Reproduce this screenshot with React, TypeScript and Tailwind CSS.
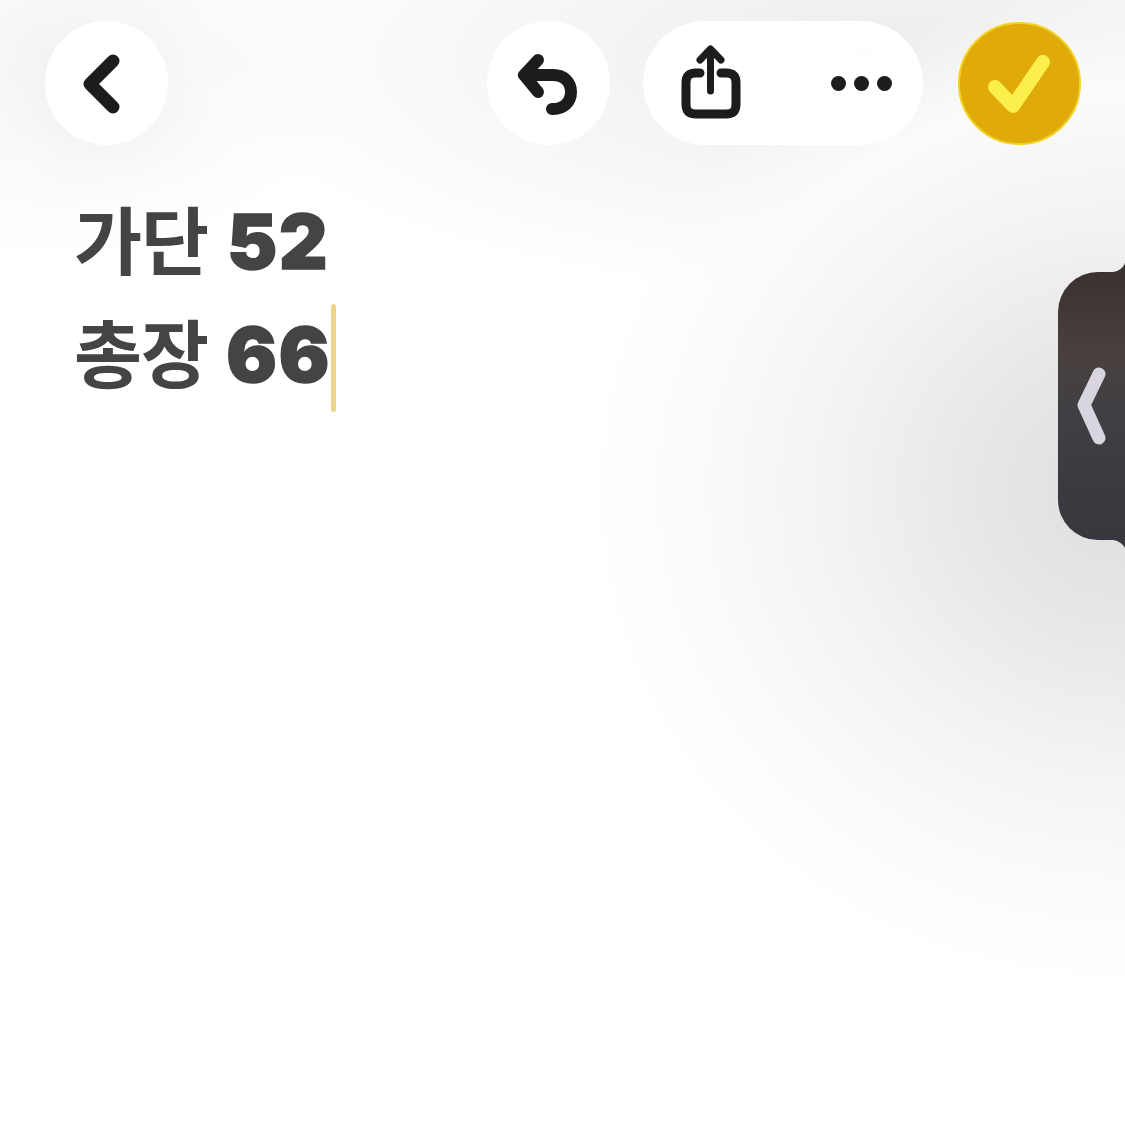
function IconButton({ children }: { children: React.ReactNode }) {
  return (
    <button className="flex h-[124px] w-[123px] items-center justify-center rounded-full bg-white">
      {children}
    </button>
  );
}

export default function App() {
  return (
    <div className="relative h-[1125px] w-[1125px] overflow-hidden bg-white bg-[radial-gradient(ellipse_540px_500px_at_1125px_490px,#dedede_0%,#e6e6e6_25%,#f3f3f3_55%,#fbfbfb_80%,#ffffff00_100%),radial-gradient(ellipse_700px_240px_at_900px_60px,#ececec_0%,#ffffff00_100%),radial-gradient(ellipse_300px_200px_at_60px_60px,#f5f5f5_0%,#ffffff00_100%)]">
      <header className="flex items-center px-[45px] pt-[21px]">
        <div className="shrink-0 drop-shadow-[0_10px_30px_rgba(0,0,0,0.03)]">
          <IconButton>
            <svg width="123" height="124" viewBox="0 0 123 124" fill="none">
              <path d="M68 40 L45 63 L68 86" stroke="#1c1c1c" strokeWidth="13" strokeLinecap="round" strokeLinejoin="round" />
            </svg>
          </IconButton>
        </div>
        <div className="ml-[319px] shrink-0">
          <IconButton>
            <svg width="123" height="124" viewBox="0 0 123 124" fill="none">
              <path d="M51 39 L37 54 L51 71" stroke="#1c1c1c" strokeWidth="12" strokeLinecap="round" strokeLinejoin="round" />
              <path d="M38 54 H66 C77 54 84 61 84 71 C84 81 77 88 66 88 H65" stroke="#1c1c1c" strokeWidth="12" strokeLinecap="round" strokeLinejoin="round" />
            </svg>
          </IconButton>
        </div>
        <div className="ml-[33px] flex h-[124px] w-[280px] shrink-0 items-center rounded-full bg-white/95 pl-[38px]">
          <svg width="60" height="76" viewBox="0 0 60 76" fill="none">
            <path d="M19 28 H15 C8 28 5 31 5 38 V59 C5 66 8 69 15 69 H45 C52 69 55 66 55 59 V38 C55 31 52 28 45 28 H40" stroke="#1c1c1c" strokeWidth="9" strokeLinecap="round" />
            <path d="M29.5 46 V6" stroke="#1c1c1c" strokeWidth="7" strokeLinecap="round" />
            <path d="M19 15 L29.5 4 L40 15" stroke="#1c1c1c" strokeWidth="7" strokeLinecap="round" strokeLinejoin="round" />
          </svg>
          <div className="ml-[90px] flex items-center gap-[8px]">
            <span className="h-[15px] w-[15px] rounded-full bg-[#1c1c1c]" />
            <span className="h-[15px] w-[15px] rounded-full bg-[#1c1c1c]" />
            <span className="h-[15px] w-[15px] rounded-full bg-[#1c1c1c]" />
          </div>
        </div>
        <button className="ml-[35px] flex h-[123px] w-[123px] shrink-0 items-center justify-center rounded-full border-2 border-[#f2d21f] bg-[#dfaa0a]">
          <svg width="119" height="119" viewBox="0 0 119 119" fill="none">
            <path d="M35 63 L53 82 L83 38" stroke="#fbf04b" strokeWidth="14" strokeLinecap="round" strokeLinejoin="round" />
          </svg>
        </button>
      </header>

      <main className="pl-[74px] pt-[36px] font-['Inter','Noto_Sans_CJK_KR',sans-serif] text-[#444444]">
        <p className="flex h-[112px] items-baseline leading-[112px]">
          <span className="font-['Noto_Sans_CJK_KR',sans-serif] text-[74px] font-bold tracking-[-1px]">가단</span>
          <span className="ml-[19px] text-[75px] font-black tracking-[2px] [-webkit-text-stroke:1.5px_#444444]">52</span>
        </p>
        <p className="mt-px flex h-[112px] items-baseline leading-[112px]">
          <span className="font-['Noto_Sans_CJK_KR',sans-serif] text-[74px] font-bold tracking-[-1px]">총장</span>
          <span className="ml-[18px] text-[75px] font-black tracking-[2px] [-webkit-text-stroke:1.5px_#444444]">66</span>
          <span className="mt-[16px] h-[108px] w-[5px] self-center rounded-full bg-[#ecd48a]" />
        </p>
      </main>

      <aside className="absolute right-0 top-[272px] flex h-[268px] w-[67px] items-center rounded-l-[40px] bg-[linear-gradient(180deg,#3a3230_0%,#4a403e_30%,#3f3f44_55%,#36383d_100%)] pl-[18px]">
        <svg width="30" height="80" viewBox="0 0 30 80" fill="none">
          <path d="M23 8 L8 39 L23 72" stroke="#d8d5de" strokeWidth="13" strokeLinecap="round" strokeLinejoin="round" />
        </svg>
        <svg width="12" height="9" viewBox="0 0 12 9" className="absolute right-0 top-[-9px]">
          <path d="M0 9 C6 8 10 5 12 0 V9 Z" fill="#3a3230" />
        </svg>
        <svg width="12" height="8" viewBox="0 0 12 8" className="absolute bottom-[-8px] right-0">
          <path d="M0 0 C6 1 10 4 12 8 V0 Z" fill="#36383d" />
        </svg>
      </aside>
    </div>
  );
}
